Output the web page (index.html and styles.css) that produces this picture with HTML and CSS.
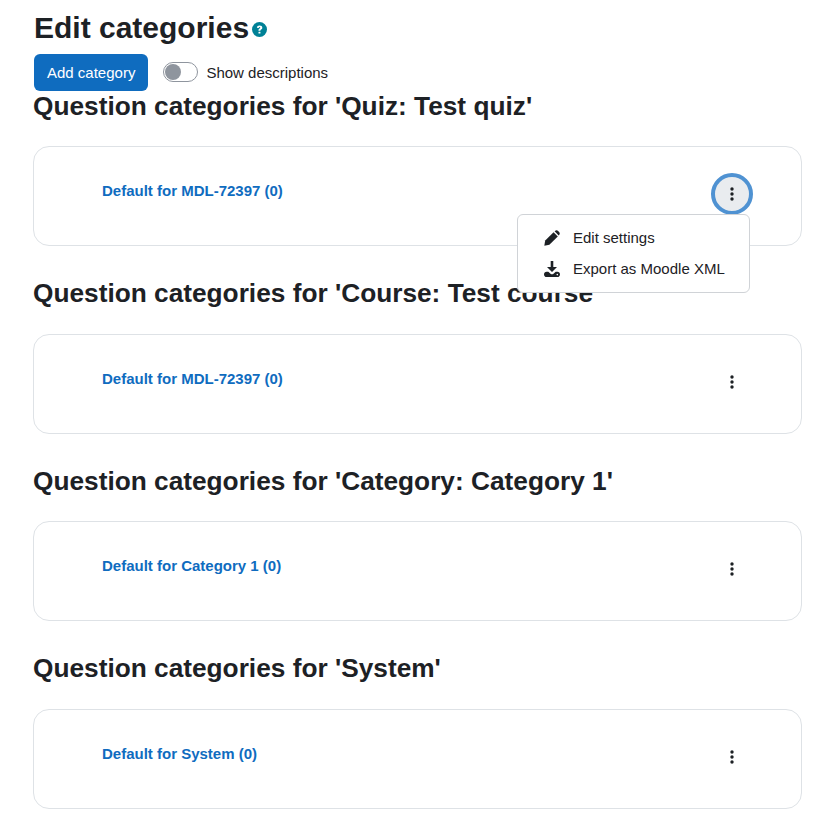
FILE: index.html
```html
<!DOCTYPE html>
<html>
  <head>
    <meta charset="UTF-8" />
    <title>Edit categories</title>
    <link rel="stylesheet" href="styles.css">
  </head>
  <body>
    <div class="container">
      <h2 class="page-title">Edit categories
        <svg class="help-icon" viewBox="0 0 16 16" aria-hidden="true">
          <circle cx="8" cy="8" r="8" fill="#008196"/>
          <path d="M5.200 6.200C5.300 4.600 6.500 3.700 8.100 3.700c1.700 0 2.900 1 2.900 2.300 0 1.100-.7 1.600-1.300 2-.5.3-.7.5-.7 1v.3H6.900v-.6c0-1 .5-1.500 1.100-1.900.5-.3.8-.5.8-.8 0-.4-.3-.6-.7-.6-.5 0-.8.3-.9.9z" fill="#fff"/>
          <rect x="6.900" y="10.300" width="2.100" height="2" rx=".3" fill="#fff"/>
        </svg>
      </h2>

      <div class="toolbar">
        <button class="btn-primary">Add category</button>
        <label class="toggle">
          <span class="toggle-track"><span class="toggle-knob"></span></span>
          Show descriptions
        </label>
      </div>

      <section class="context">
        <h3>Question categories for 'Quiz: Test quiz'</h3>
        <div class="card">
          <a class="cat-link" href="#">Default for MDL-72397 (0)</a>
          <div class="menu-wrap">
            <button class="kebab active">
              <svg viewBox="0 0 4 14"><circle cx="2" cy="2" r="1.7"/><circle cx="2" cy="7" r="1.7"/><circle cx="2" cy="12" r="1.7"/></svg>
            </button>
            <div class="dropdown">
              <a class="dropdown-item" href="#">
                <svg viewBox="0 0 16 16"><path d="M.3 15.700l.9-5.100 8.400-8.400 4.200 4.200-8.400 8.400z"/><path d="M10.600 1.300l.4-.4c.9-.9 2.200-.9 3.100 0l1 1c.9.9.9 2.200 0 3.100l-.4.4z"/></svg>
                Edit settings
              </a>
              <a class="dropdown-item" href="#">
                <svg viewBox="0 0 16 16"><path d="M6.700 0h2.600v6h3.700L8 11 3 6h3.700z"/><path d="M2.500 10.800h1.800l2.500 2.100c.7.600 1.700.600 2.400 0l2.500-2.100h1.800c1.400 0 2.500 1.200 2.500 2.600S14.900 16 13.500 16h-11C1.100 16 0 14.800 0 13.400s1.100-2.600 2.500-2.600z"/><circle cx="13.300" cy="13.600" r=".8" fill="#fff"/></svg>
                Export as Moodle XML
              </a>
            </div>
          </div>
        </div>
      </section>

      <section class="context">
        <h3>Question categories for 'Course: Test course'</h3>
        <div class="card">
          <a class="cat-link" href="#">Default for MDL-72397 (0)</a>
          <div class="menu-wrap">
            <button class="kebab">
              <svg viewBox="0 0 4 14"><circle cx="2" cy="2" r="1.7"/><circle cx="2" cy="7" r="1.7"/><circle cx="2" cy="12" r="1.7"/></svg>
            </button>
          </div>
        </div>
      </section>

      <section class="context">
        <h3>Question categories for 'Category: Category 1'</h3>
        <div class="card">
          <a class="cat-link" href="#">Default for Category 1 (0)</a>
          <div class="menu-wrap">
            <button class="kebab">
              <svg viewBox="0 0 4 14"><circle cx="2" cy="2" r="1.7"/><circle cx="2" cy="7" r="1.7"/><circle cx="2" cy="12" r="1.7"/></svg>
            </button>
          </div>
        </div>
      </section>

      <section class="context">
        <h3>Question categories for 'System'</h3>
        <div class="card">
          <a class="cat-link" href="#">Default for System (0)</a>
          <div class="menu-wrap">
            <button class="kebab">
              <svg viewBox="0 0 4 14"><circle cx="2" cy="2" r="1.7"/><circle cx="2" cy="7" r="1.7"/><circle cx="2" cy="12" r="1.7"/></svg>
            </button>
          </div>
        </div>
      </section>
    </div>
  </body>
</html>
```

FILE: styles.css
```css
body {
  font-family: "Liberation Sans", Arial, sans-serif;
  margin: 0;
  background: #fff;
  color: #1d2125;
  font-size: 15px;
}

.container {
  padding: 10px 23px 0 33px;
}

.page-title {
  display: flex;
  align-items: center;
  margin: 0 0 7.9px 1px;
  font-size: 30px;
  line-height: 36px;
  font-weight: 700;
}

.help-icon {
  width: 15px;
  height: 15px;
  margin: 3px 0 0 3px;
}

.toolbar {
  display: flex;
  align-items: center;
  margin-left: 1px;
}

.btn-primary {
  height: 37px;
  padding: 0 13px;
  border: none;
  border-radius: 6px;
  background: #0f6cbf;
  color: #fff;
  font-family: inherit;
  font-size: 15px;
}

.toggle {
  display: flex;
  align-items: center;
  gap: 8px;
  margin-left: 15px;
}

.toggle-track {
  width: 32px;
  height: 18px;
  border: 1px solid #8f959e;
  border-radius: 10px;
  display: flex;
  align-items: center;
  padding-left: 1px;
}

.toggle-knob {
  width: 16px;
  height: 16px;
  border-radius: 50%;
  background: #8f959e;
}

.context h3 {
  margin: 0;
  font-size: 26.25px;
  line-height: 31px;
  font-weight: 700;
}

.context {
  margin-bottom: 32.3px;
}

.card {
  display: flex;
  justify-content: space-between;
  height: 100px;
  box-sizing: border-box;
  margin-top: 24.2px;
  padding: 35px 48px 0 68px;
  border: 1px solid #dee2e6;
  border-radius: 16px;
}

.cat-link {
  color: #0f6cbf;
  font-weight: 700;
  text-decoration: none;
  line-height: 18px;
}

.menu-wrap {
  position: relative;
}

.kebab {
  width: 42px;
  height: 42px;
  margin-top: -9px;
  padding: 0;
  display: flex;
  align-items: center;
  justify-content: center;
  border: none;
  border-radius: 50%;
  background: transparent;
}

.kebab svg {
  width: 4px;
  height: 14px;
  margin-left: .6px;
  fill: #1d2125;
}

.kebab.active {
  background: #e9ecef;
  border: 4px solid #4f92d2;
}

.dropdown {
  position: absolute;
  top: 32px;
  right: 3px;
  width: 233px;
  box-sizing: border-box;
  padding: 7px 0 8px;
  background: #fff;
  border: 1px solid #d0d3d7;
  border-radius: 6px;
}

.dropdown-item {
  display: flex;
  align-items: center;
  height: 31px;
  padding-left: 26px;
  color: #1d2125;
  text-decoration: none;
}

.dropdown-item svg {
  width: 16px;
  height: 16px;
  margin-right: 13px;
  fill: #1d2125;
}
```
